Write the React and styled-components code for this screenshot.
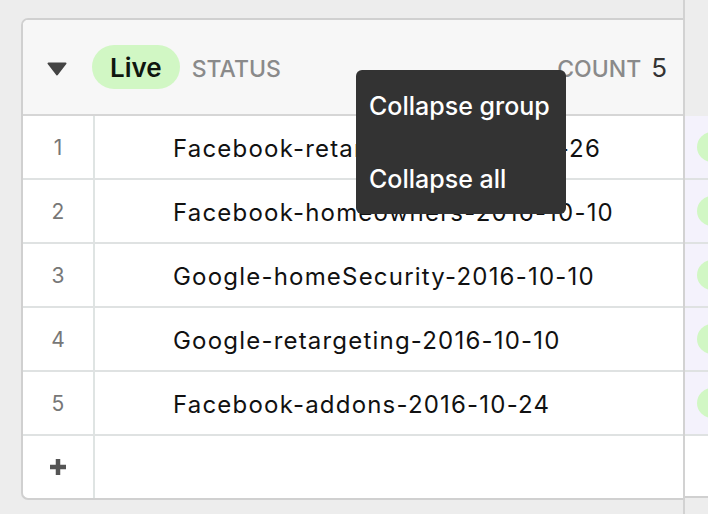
import React from 'react';
import styled, { createGlobalStyle } from 'styled-components';

const GlobalStyle = createGlobalStyle`
  html, body {
    margin: 0;
    padding: 0;
    background: #ededed;
    font-family: Inter, 'Liberation Sans', sans-serif;
  }
`;

const rows = [
  'Facebook-retargeting-2016-09-26',
  'Facebook-homeowners-2016-10-10',
  'Google-homeSecurity-2016-10-10',
  'Google-retargeting-2016-10-10',
  'Facebook-addons-2016-10-24',
];

const Page = styled.div`
  position: relative;
  display: flex;
  width: 708px;
  height: 514px;
  overflow: hidden;
`;

const LeftPane = styled.div`
  width: 662px;
  flex-shrink: 0;
  padding: 18px 0 0 21px;
  border-right: 2px solid #d2d2d2;
`;

const Card = styled.div`
  background: #fff;
  border: 2px solid #d0d0d0;
  border-right: none;
  border-radius: 7px 0 0 7px;
  overflow: hidden;
`;

const GroupHeader = styled.div`
  height: 94px;
  display: flex;
  align-items: center;
  background: #f7f7f7;
  border-bottom: 2px solid #d6d6d6;
  padding: 0 16px 0 24px;
`;

const Caret = styled.svg`
  width: 20px;
  height: 14px;
  margin-right: 25px;
  margin-top: 3px;
`;

const Pill = styled.span`
  display: inline-flex;
  align-items: center;
  height: 44px;
  padding: 0 18px;
  border-radius: 22px;
  background: #d1f7c4;
  color: #0f160f;
  font-size: 26px;
  font-weight: 600;
`;

const FieldLabel = styled.span`
  font-size: 23px;
  font-weight: 500;
  color: #8a8a8a;
  margin-left: ${p => p.$gap || 0}px;
  margin-top: 3px;
`;

const Spacer = styled.div`
  flex: 1;
`;

const CountValue = styled.span`
  font-size: 26px;
  color: #333;
  margin-left: 10px;
`;

const Row = styled.div`
  display: flex;
  height: ${p => (p.$last ? 62 : 64)}px;
  border-bottom: ${p => (p.$last ? 'none' : '2px solid #dfe2e2')};
  box-sizing: border-box;
`;

const NumCell = styled.div`
  width: 70px;
  flex-shrink: 0;
  display: flex;
  align-items: center;
  justify-content: center;
  border-right: 2px solid #dfe4e3;
  color: #777;
  font-size: 21px;
`;

const NameCell = styled.div`
  flex: 1;
  display: flex;
  align-items: center;
  padding-left: 78px;
  padding-top: 2px;
  color: #111;
  font-size: 24px;
  letter-spacing: 1.2px;
  white-space: nowrap;
`;

const RightPane = styled.div`
  flex: 1;
  padding-top: 116px;
`;

const SideCell = styled.div`
  height: ${p => (p.$last ? 62 : 64)}px;
  box-sizing: border-box;
  background: ${p => (p.$last ? '#fff' : '#f4f2fc')};
  border-bottom: 2px solid ${p => (p.$last ? '#d0d0d0' : '#dfe2e2')};
  display: flex;
  align-items: center;
  padding-left: 12px;
`;

const Dot = styled.span`
  width: 40px;
  height: 30px;
  border-radius: 15px;
  background: #d1f7c4;
`;

const Menu = styled.div`
  position: absolute;
  left: 356px;
  top: 70px;
  width: 210px;
  height: 144px;
  background: #333;
  border-radius: 6px;
  padding: 15px 0 0 13px;
  box-sizing: border-box;
  display: flex;
  flex-direction: column;
  gap: 30px;
`;

const MenuItem = styled.div`
  color: #fff;
  font-size: 25px;
  font-weight: 500;
  line-height: 43px;
`;

export default function App() {
  return (
    <Page>
      <GlobalStyle />
      <LeftPane>
        <Card>
          <GroupHeader>
            <Caret viewBox="0 0 20 14">
              <path d="M1.5 1.5 H18.5 L10 12.5 Z" fill="#444" stroke="#444" strokeWidth="2" strokeLinejoin="round" />
            </Caret>
            <Pill>Live</Pill>
            <FieldLabel $gap={12}>STATUS</FieldLabel>
            <Spacer />
            <FieldLabel>COUNT</FieldLabel>
            <CountValue>5</CountValue>
          </GroupHeader>
          {rows.map((name, i) => (
            <Row key={name}>
              <NumCell>{i + 1}</NumCell>
              <NameCell>{name}</NameCell>
            </Row>
          ))}
          <Row $last>
            <NumCell>
              <svg width="18" height="18" viewBox="0 0 18 18">
                <path d="M9 1 V17 M1 9 H17" stroke="#555" strokeWidth="4.5" />
              </svg>
            </NumCell>
            <NameCell />
          </Row>
        </Card>
      </LeftPane>
      <RightPane>
        {rows.map(name => (
          <SideCell key={name}>
            <Dot />
          </SideCell>
        ))}
        <SideCell $last />
      </RightPane>
      <Menu>
        <MenuItem>Collapse group</MenuItem>
        <MenuItem>Collapse all</MenuItem>
      </Menu>
    </Page>
  );
}
